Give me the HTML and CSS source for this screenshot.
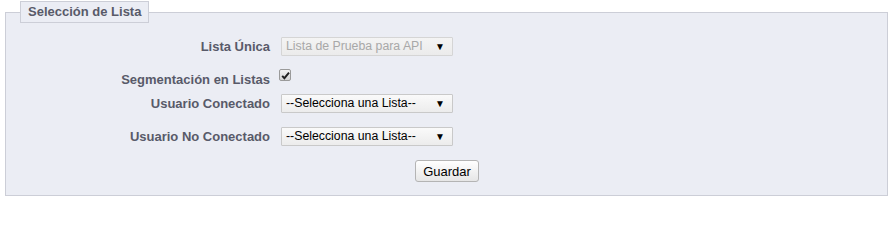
FILE: index.html
```html
<!DOCTYPE html>
<html lang="es">
<head>
<meta charset="utf-8">
<link rel="stylesheet" href="styles.css">
</head>
<body>
<form class="form">
  <fieldset class="box">
    <legend class="box-title">Selección de Lista</legend>
    <div class="row row-first">
      <label class="lbl">Lista Única</label>
      <div class="sel sel-disabled"><span class="sel-text">Lista de Prueba para API</span><span class="sel-arrow">▼</span></div>
    </div>
    <div class="row row-check">
      <label class="lbl lbl-low">Segmentación en Listas</label>
      <span class="check"><svg width="9" height="9" viewBox="0 0 9 9"><path d="M1.2 4.8 L3.4 7.2 L8 1.6" fill="none" stroke="#222" stroke-width="1.9"/></svg></span>
    </div>
    <div class="row row-third">
      <label class="lbl">Usuario Conectado</label>
      <div class="sel"><span class="sel-text">--Selecciona una Lista--</span><span class="sel-arrow">▼</span></div>
    </div>
    <div class="row row-fourth">
      <label class="lbl">Usuario No Conectado</label>
      <div class="sel"><span class="sel-text">--Selecciona una Lista--</span><span class="sel-arrow">▼</span></div>
    </div>
    <div class="actions">
      <button type="button" class="btn">Guardar</button>
    </div>
  </fieldset>
</form>
</body>
</html>
```
FILE: styles.css
```css
html, body {
  margin: 0;
  padding: 0;
  background: #ffffff;
}
body {
  font-family: "Liberation Sans", Arial, sans-serif;
  font-size: 13px;
  color: #000;
}
.form {
  padding: 1px 3px 0 5px;
}
.box {
  margin: 0;
  padding: 0 0 13px 0;
  border: 1px solid #ccced7;
  background: #ebedf4;
  min-width: 0;
}
.box-title {
  margin-left: 14px;
  padding: 0 7px;
  height: 20px;
  line-height: 20px;
  border: 1px solid #ccced7;
  background: #ebedf4;
  font-weight: bold;
  color: #585a69;
  font-size: 13px;
}
.row {
  display: grid;
  grid-template-columns: 264px auto;
  column-gap: 11px;
  align-items: center;
}
.row-first { margin-top: 14px; height: 19px; }
.row-check { margin-top: 13px; height: 17px; align-items: start; }
.row-third { margin-top: 8px; height: 19px; }
.row-fourth { margin-top: 14px; height: 19px; }
.lbl {
  text-align: right;
  font-weight: bold;
  color: #585a69;
  line-height: 16px;
}
.lbl-low {
  margin-top: 3px;
}
.sel {
  box-sizing: border-box;
  width: 172px;
  height: 19px;
  border: 1px solid #c9c9c9;
  border-radius: 1px;
  background: linear-gradient(#fafafa, #ececec);
  display: flex;
  align-items: center;
  justify-content: space-between;
  padding: 0 7px 0 4px;
  color: #000;
  font-size: 12.3px;
  line-height: 17px;
}
.sel-disabled {
  color: #a8a8a8;
  background: linear-gradient(#f4f4f4, #ebebeb);
  border-color: #d5d5d5;
}
.sel-disabled .sel-arrow { color: #000; }
.sel-arrow {
  font-size: 10px;
}
.check {
  box-sizing: border-box;
  width: 12px;
  height: 12px;
  margin-left: -2px;
  border: 1px solid #9a9a9a;
  border-radius: 2px;
  background: linear-gradient(#f4f4f4, #d6d6d6);
  display: flex;
  align-items: center;
  justify-content: center;
}
.actions {
  margin-top: 14px;
  display: flex;
  padding-left: 409px;
}
.btn {
  box-sizing: border-box;
  width: 64px;
  height: 22px;
  padding: 0;
  font-family: "Liberation Sans", Arial, sans-serif;
  font-size: 13px;
  color: #000;
  border: 1px solid #b4b4b4;
  border-radius: 3px;
  background: linear-gradient(#ffffff, #e6e6e6);
}
```
